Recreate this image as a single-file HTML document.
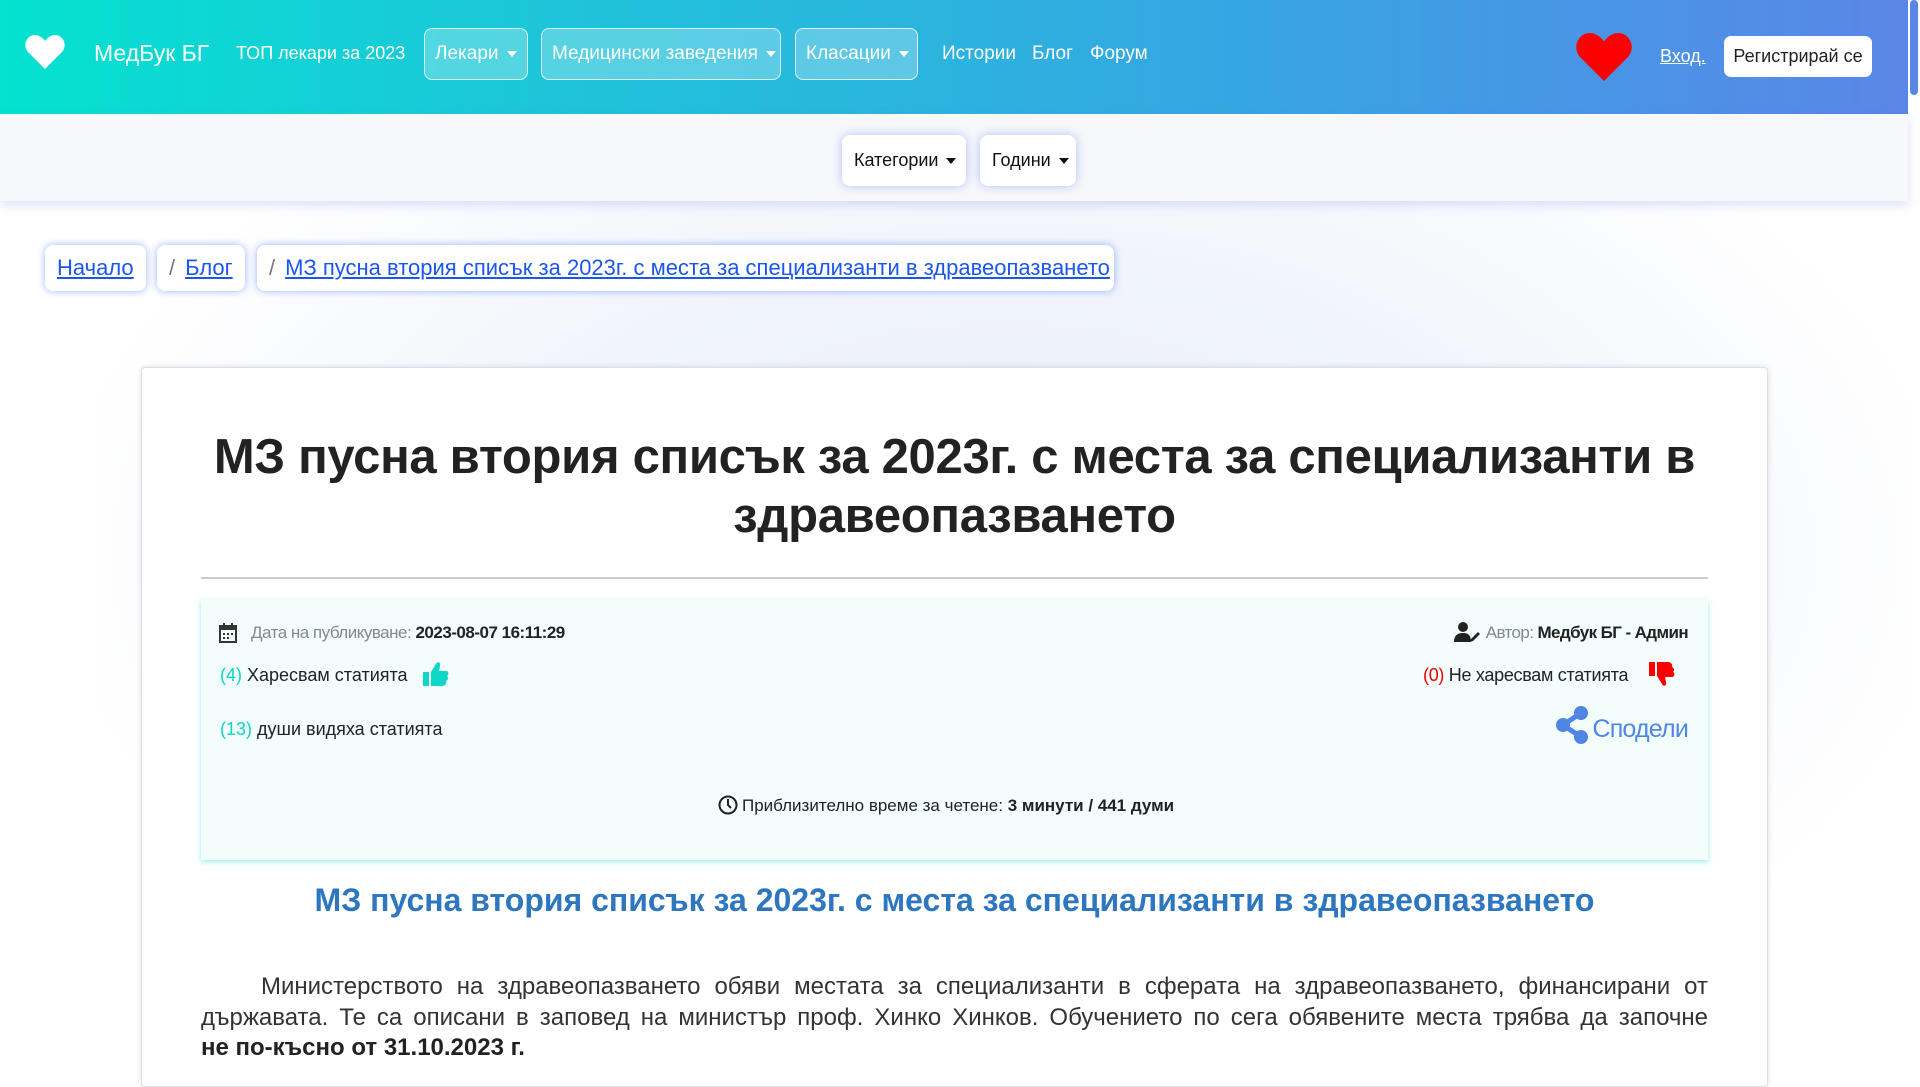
<!DOCTYPE html>
<html><head><meta charset="utf-8">
<style>
*{box-sizing:border-box;margin:0;padding:0}
body{width:1920px;height:1080px;overflow:hidden;font-family:"Liberation Sans",sans-serif;background:#fff;position:relative}
.abs{position:absolute}
.nav{left:0;top:0;width:1908px;height:114px;background:linear-gradient(90deg,#04e2d0 0%,#1fc3da 30%,#36a6e2 65%,#5a86e8 100%);box-shadow:0 4px 8px rgba(90,110,230,.35)}
.scroll{left:1908px;top:0;width:12px;height:1080px;background:#fff}
.scroll div{position:absolute;left:2px;top:0;width:8px;height:95px;border-radius:4px;background:#5a86e8}
.nav .t{position:absolute;color:#fff;white-space:nowrap}
.btn{position:absolute;border:1px solid rgba(255,255,255,.8);border-radius:8px;background:rgba(255,255,255,.25);color:#fff;font-size:19px;padding-left:10px;line-height:50px;height:52px;white-space:nowrap}
.caret{display:inline-block;width:0;height:0;border-left:5px solid transparent;border-right:5px solid transparent;border-top:6px solid currentColor;vertical-align:middle;margin-left:8px}
.sub{left:0;top:114px;width:1908px;height:87px;background:#f7f8fb;box-shadow:0 4px 10px rgba(120,130,230,.25)}
.wbtn{position:absolute;background:#fff;border-radius:8px;box-shadow:0 0 10px rgba(90,120,240,.45);font-size:18px;color:#111;line-height:51px;padding-left:12px}
.bg{left:100px;top:201px;width:1808px;height:879px;background:radial-gradient(ellipse at 50% 40%,#e8eef9 0%,#f1f4fb 40%,#fff 75%)}
.bc{position:absolute;top:245px;height:46px;background:#fff;border-radius:8px;box-shadow:0 0 8px rgba(70,120,255,.55);font-size:22px;line-height:46px;padding-left:12px;white-space:nowrap}
.bc a{color:#1a56f0;text-decoration:underline}
.bc span{color:#777;margin-right:10px}
.card{left:141px;top:367px;width:1627px;height:720px;background:#fff;border:1px solid #dde;border-radius:4px;box-shadow:0 0 6px rgba(0,0,0,.12)}
h1{position:absolute;left:201px;top:428px;width:1507px;text-align:center;font-size:49px;line-height:59px;color:#222;font-weight:bold;letter-spacing:-0.3px}
.hr{left:201px;top:577px;width:1507px;height:2px;background:#ccc}
.info{left:201px;top:599px;width:1507px;height:261px;background:#f2fdfc;box-shadow:0 2px 5px rgba(60,220,210,.5)}
.s{position:absolute;font-size:18px;color:#222;white-space:nowrap}
.g{color:#888}.tq{color:#0fd6c6}.rd{color:#e00}
h2{position:absolute;left:201px;top:882px;width:1507px;text-align:center;font-size:32px;color:#2d76c0;font-weight:bold}
p{position:absolute;left:201px;top:972px;width:1507px;font-size:24px;line-height:30.5px;color:#333;text-align:justify;text-indent:60px}
</style></head><body>
<div class="abs bg"></div>
<div class="abs nav">
 <svg class="abs" style="left:25px;top:35px" width="40" height="34" viewBox="0 0 40 34"><path d="M20 34 L3 17 C-3 10 2 0 10 0 C14 0 18 3 20 6 C22 3 26 0 30 0 C38 0 43 10 37 17 Z" fill="#fff"/></svg>
 <div class="t" style="left:94px;top:40px;font-size:23px">МедБук БГ</div>
 <div class="t" style="left:236px;top:43px;font-size:18px">ТОП лекари за 2023</div>
 <div class="btn" style="left:424px;top:28px;width:104px">Лекари<span class="caret"></span></div>
 <div class="btn" style="left:541px;top:28px;width:240px">Медицински заведения<span class="caret"></span></div>
 <div class="btn" style="left:795px;top:28px;width:123px">Класации<span class="caret"></span></div>
 <div class="t" style="left:942px;top:43px;font-size:19px">Истории</div>
 <div class="t" style="left:1032px;top:43px;font-size:19px">Блог</div>
 <div class="t" style="left:1090px;top:43px;font-size:19px">Форум</div>
 <svg class="abs" style="left:1574px;top:33px" width="60" height="48" viewBox="0 0 40 34"><path d="M20 34 L3 17 C-3 10 2 0 10 0 C14 0 18 3 20 6 C22 3 26 0 30 0 C38 0 43 10 37 17 Z" fill="#f00"/></svg>
 <div class="t" style="left:1660px;top:46px;font-size:18px;text-decoration:underline">Вход.</div>
 <div class="abs" style="left:1724px;top:36px;width:148px;height:41px;background:#fff;border-radius:7px;color:#222;font-size:18px;line-height:41px;text-align:center">Регистрирай се</div>
</div>
<div class="abs scroll"><div></div></div>
<div class="abs sub">
 <div class="wbtn" style="left:842px;top:21px;width:124px;height:51px">Категории<span class="caret"></span></div>
 <div class="wbtn" style="left:980px;top:21px;width:96px;height:51px">Години<span class="caret"></span></div>
</div>
<div class="bc" style="left:45px;width:101px"><a>Начало</a></div>
<div class="bc" style="left:157px;width:88px"><span>/</span><a>Блог</a></div>
<div class="bc" style="left:257px;width:857px"><span>/</span><a>МЗ пусна втория списък за 2023г. с места за специализанти в здравеопазването</a></div>
<div class="abs card"></div>
<h1>МЗ пусна втория списък за 2023г. с места за специализанти в здравеопазването</h1>
<div class="abs hr"></div>
<div class="abs info">
 <svg class="abs" style="left:18px;top:24px" width="18" height="20" viewBox="0 0 18 20"><rect x="1" y="3" width="16" height="16" fill="none" stroke="#333" stroke-width="2"/><rect x="1" y="3" width="16" height="4" fill="#333"/><rect x="4" y="0" width="2" height="5" fill="#333"/><rect x="12" y="0" width="2" height="5" fill="#333"/><path d="M4 10h2v2H4zM8 10h2v2H8zM12 10h2v2h-2zM4 14h2v2H4zM8 14h2v2H8z" fill="#333"/></svg>
 <div class="s" style="left:50px;top:24px;font-size:17px;letter-spacing:-0.5px"><span class="g">Дата на публикуване:</span> <b>2023-08-07 16:11:29</b></div>
 <svg class="abs" style="left:1253px;top:22px" width="26" height="22" viewBox="0 0 26 22"><circle cx="9" cy="6" r="5" fill="#222"/><path d="M0 21 C0 14 4 12 9 12 C14 12 17 14 17 21Z" fill="#222"/><path d="M17 18 L24 11 L26 13 L19 20 L16 21Z" fill="#222"/></svg>
 <div class="s" style="right:20px;top:24px;font-size:17px;letter-spacing:-0.6px"><span class="g">Автор:</span> <b>Медбук БГ - Админ</b></div>
 <div class="s" style="left:19px;top:66px"><span class="tq">(4)</span> Харесвам статията</div>
 <svg class="abs" style="left:222px;top:62px" width="26" height="26" viewBox="0 0 26 26"><rect x="0" y="11" width="6" height="14" fill="#0fd6c6"/><path d="M8 11 L13 3 C14 0 18 1 17 5 L16 10 H23 C26 10 26 14 24 15 C26 17 25 19 23 20 C24 22 22 25 19 25 H8Z" fill="#0fd6c6"/></svg>
 <div class="s" style="left:1222px;top:66px;letter-spacing:-0.3px"><span class="rd">(0)</span> Не харесвам статията</div>
 <svg class="abs" style="left:1448px;top:62px" width="26" height="26" viewBox="0 0 26 26" transform="scale(1,-1)"><rect x="0" y="11" width="6" height="14" fill="#f00"/><path d="M8 11 L13 3 C14 0 18 1 17 5 L16 10 H23 C26 10 26 14 24 15 C26 17 25 19 23 20 C24 22 22 25 19 25 H8Z" fill="#f00"/></svg>
 <div class="s" style="left:19px;top:120px"><span class="tq">(13)</span> души видяха статията</div>
 <svg class="abs" style="left:1355px;top:107px" width="34" height="38" viewBox="0 0 34 38"><g fill="#4f86e6"><circle cx="25" cy="7" r="7"/><circle cx="7" cy="19" r="7"/><circle cx="25" cy="31" r="7"/></g><path d="M25 7 L7 19 L25 31" stroke="#4f86e6" stroke-width="5" fill="none"/></svg>
 <div class="s" style="right:20px;top:116px;font-size:25px;color:#4f86e6;letter-spacing:-0.8px">Сподели</div>
 <svg class="abs" style="left:517px;top:196px" width="20" height="20" viewBox="0 0 20 20"><circle cx="10" cy="10" r="8.5" fill="none" stroke="#222" stroke-width="2"/><path d="M10 4v6l3 3" stroke="#222" stroke-width="2" fill="none"/></svg>
 <div class="s" style="left:541px;top:197px;font-size:17px">Приблизително време за четене: <b>3 минути / 441 думи</b></div>
</div>
<h2>МЗ пусна втория списък за 2023г. с места за специализанти в здравеопазването</h2>
<p>Министерството на здравеопазването обяви местата за специализанти в сферата на здравеопазването, финансирани от държавата. Те са описани в заповед на министър проф. Хинко Хинков. Обучението по сега обявените места трябва да започне <b style="color:#222;white-space:nowrap">не по-късно от 31.10.2023 г.</b></p>
</body></html>
